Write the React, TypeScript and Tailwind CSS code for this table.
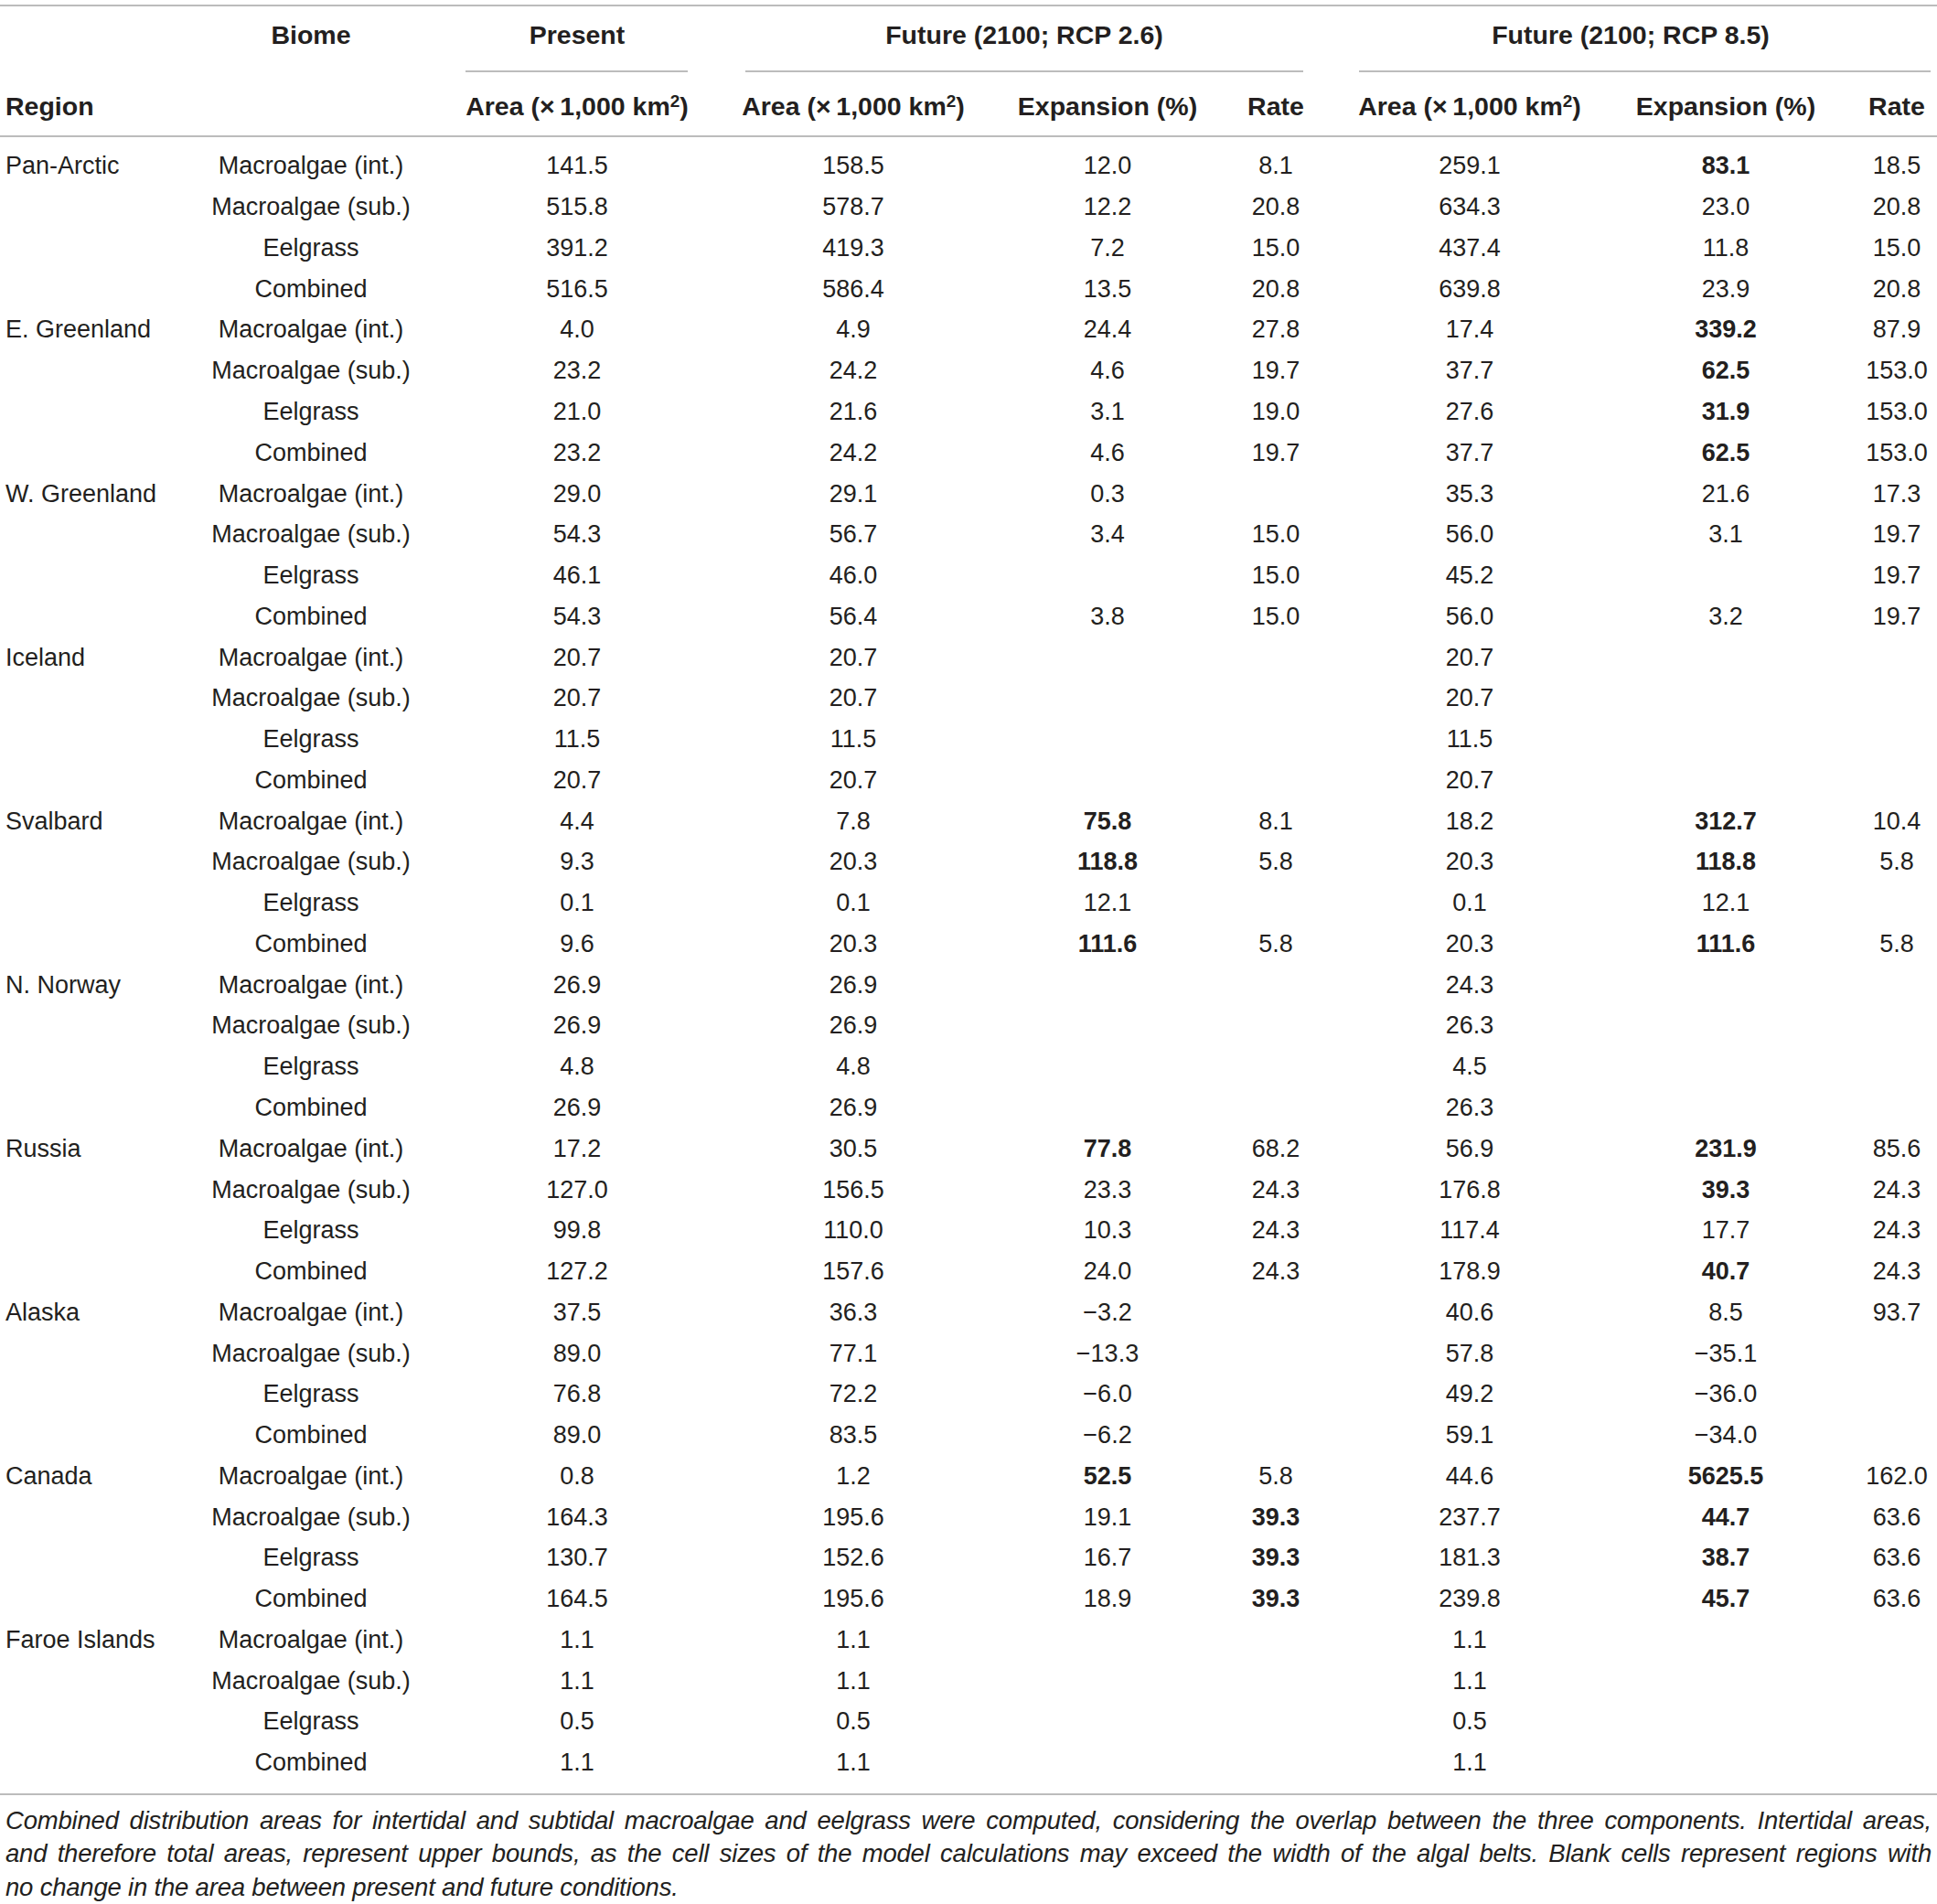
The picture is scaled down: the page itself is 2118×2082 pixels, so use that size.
import React from "react";

type Row = [string, string, string, string, string, string, string, string, string];

const data: Row[] = [
  ["Pan-Arctic", "Macroalgae (int.)", "141.5", "158.5", "12.0", "8.1", "259.1", "*83.1", "18.5"],
  ["", "Macroalgae (sub.)", "515.8", "578.7", "12.2", "20.8", "634.3", "23.0", "20.8"],
  ["", "Eelgrass", "391.2", "419.3", "7.2", "15.0", "437.4", "11.8", "15.0"],
  ["", "Combined", "516.5", "586.4", "13.5", "20.8", "639.8", "23.9", "20.8"],
  ["E. Greenland", "Macroalgae (int.)", "4.0", "4.9", "24.4", "27.8", "17.4", "*339.2", "87.9"],
  ["", "Macroalgae (sub.)", "23.2", "24.2", "4.6", "19.7", "37.7", "*62.5", "153.0"],
  ["", "Eelgrass", "21.0", "21.6", "3.1", "19.0", "27.6", "*31.9", "153.0"],
  ["", "Combined", "23.2", "24.2", "4.6", "19.7", "37.7", "*62.5", "153.0"],
  ["W. Greenland", "Macroalgae (int.)", "29.0", "29.1", "0.3", "", "35.3", "21.6", "17.3"],
  ["", "Macroalgae (sub.)", "54.3", "56.7", "3.4", "15.0", "56.0", "3.1", "19.7"],
  ["", "Eelgrass", "46.1", "46.0", "", "15.0", "45.2", "", "19.7"],
  ["", "Combined", "54.3", "56.4", "3.8", "15.0", "56.0", "3.2", "19.7"],
  ["Iceland", "Macroalgae (int.)", "20.7", "20.7", "", "", "20.7", "", ""],
  ["", "Macroalgae (sub.)", "20.7", "20.7", "", "", "20.7", "", ""],
  ["", "Eelgrass", "11.5", "11.5", "", "", "11.5", "", ""],
  ["", "Combined", "20.7", "20.7", "", "", "20.7", "", ""],
  ["Svalbard", "Macroalgae (int.)", "4.4", "7.8", "*75.8", "8.1", "18.2", "*312.7", "10.4"],
  ["", "Macroalgae (sub.)", "9.3", "20.3", "*118.8", "5.8", "20.3", "*118.8", "5.8"],
  ["", "Eelgrass", "0.1", "0.1", "12.1", "", "0.1", "12.1", ""],
  ["", "Combined", "9.6", "20.3", "*111.6", "5.8", "20.3", "*111.6", "5.8"],
  ["N. Norway", "Macroalgae (int.)", "26.9", "26.9", "", "", "24.3", "", ""],
  ["", "Macroalgae (sub.)", "26.9", "26.9", "", "", "26.3", "", ""],
  ["", "Eelgrass", "4.8", "4.8", "", "", "4.5", "", ""],
  ["", "Combined", "26.9", "26.9", "", "", "26.3", "", ""],
  ["Russia", "Macroalgae (int.)", "17.2", "30.5", "*77.8", "68.2", "56.9", "*231.9", "85.6"],
  ["", "Macroalgae (sub.)", "127.0", "156.5", "23.3", "24.3", "176.8", "*39.3", "24.3"],
  ["", "Eelgrass", "99.8", "110.0", "10.3", "24.3", "117.4", "17.7", "24.3"],
  ["", "Combined", "127.2", "157.6", "24.0", "24.3", "178.9", "*40.7", "24.3"],
  ["Alaska", "Macroalgae (int.)", "37.5", "36.3", "\u22123.2", "", "40.6", "8.5", "93.7"],
  ["", "Macroalgae (sub.)", "89.0", "77.1", "\u221213.3", "", "57.8", "\u221235.1", ""],
  ["", "Eelgrass", "76.8", "72.2", "\u22126.0", "", "49.2", "\u221236.0", ""],
  ["", "Combined", "89.0", "83.5", "\u22126.2", "", "59.1", "\u221234.0", ""],
  ["Canada", "Macroalgae (int.)", "0.8", "1.2", "*52.5", "5.8", "44.6", "*5625.5", "162.0"],
  ["", "Macroalgae (sub.)", "164.3", "195.6", "19.1", "*39.3", "237.7", "*44.7", "63.6"],
  ["", "Eelgrass", "130.7", "152.6", "16.7", "*39.3", "181.3", "*38.7", "63.6"],
  ["", "Combined", "164.5", "195.6", "18.9", "*39.3", "239.8", "*45.7", "63.6"],
  ["Faroe Islands", "Macroalgae (int.)", "1.1", "1.1", "", "", "1.1", "", ""],
  ["", "Macroalgae (sub.)", "1.1", "1.1", "", "", "1.1", "", ""],
  ["", "Eelgrass", "0.5", "0.5", "", "", "0.5", "", ""],
  ["", "Combined", "1.1", "1.1", "", "", "1.1", "", ""],
];

const grid =
  "grid grid-cols-[200px_280px_302px_302px_254px_114px_310px_268px_88px]";

function cellClass(i: number) {
  if (i === 0) return "flex items-center justify-start pl-[6px] whitespace-nowrap";
  if (i === 7) return "flex items-center justify-center pr-[18px] whitespace-nowrap";
  return "flex items-center justify-center whitespace-nowrap";
}

function Area() {
  return (
    <span>
      Area (×{"\u2009"}1,000 km<sup className="text-[19px]">2</sup>)
    </span>
  );
}

export default function App() {
  return (
    <div
      className="w-[2118px] h-[2082px] bg-white text-[#231f20] overflow-hidden"
      style={{ fontFamily: '"Liberation Sans", Arial, sans-serif' }}
    >
      <div className="pt-[5px]">
        <div className="border-t-2 border-[#bcbcbc]" />
        {/* Header row 1 */}
        <div className={grid + " text-[28.5px] font-bold leading-[62px]"}>
          <div />
          <div className="flex justify-center">Biome</div>
          <div className="flex flex-col">
            <div className="flex justify-center">Present</div>
            <div className="mt-[8px] ml-[29px] mr-[30px] border-t-2 border-[#bcbcbc]" />
          </div>
          <div className="col-span-3 flex flex-col">
            <div className="flex justify-center pl-[6px]">Future (2100; RCP 2.6)</div>
            <div className="mt-[8px] ml-[33px] mr-[27px] border-t-2 border-[#bcbcbc]" />
          </div>
          <div className="col-span-3 flex flex-col">
            <div className="flex justify-center pr-[4px]">Future (2100; RCP 8.5)</div>
            <div className="mt-[8px] ml-[34px] mr-[7px] border-t-2 border-[#bcbcbc]" />
          </div>
        </div>
        {/* Header row 2 */}
        <div className={grid + " text-[28.5px] font-bold h-[71px] leading-[62px] pt-[5px] border-b-2 border-[#bcbcbc]"}>
          <div className={cellClass(0)}>Region</div>
          <div className={cellClass(1)} />
          <div className={cellClass(2)}>
            <Area />
          </div>
          <div className={cellClass(3)}>
            <Area />
          </div>
          <div className={cellClass(4)}>Expansion (%)</div>
          <div className={cellClass(5)}>Rate</div>
          <div className={cellClass(6)}>
            <Area />
          </div>
          <div className={cellClass(7)}>Expansion (%)</div>
          <div className={cellClass(8)}>Rate</div>
        </div>
        {/* Body */}
        <div className={grid + " auto-rows-[44.77px] text-[27px] leading-[44px] pt-[9px] pb-[11px] border-b-2 border-[#bcbcbc]"}>
          {data.map((row, r) =>
            row.map((v, i) => {
              const bold = v.startsWith("*");
              const text = bold ? v.slice(1) : v;
              return (
                <div key={r + "-" + i} className={cellClass(i) + (bold ? " font-bold" : "")}>
                  {text}
                </div>
              );
            })
          )}
        </div>
        {/* Caption */}
        <div className="pt-[10px] pl-[6px] pr-[6px] text-[27.5px] tracking-[-0.2px] italic leading-[36.7px]">
          <div className="text-justify [text-align-last:justify]">
            Combined distribution areas for intertidal and subtidal macroalgae and eelgrass were computed, considering the overlap between the three components. Intertidal areas,
          </div>
          <div className="text-justify [text-align-last:justify]">
            and therefore total areas, represent upper bounds, as the cell sizes of the model calculations may exceed the width of the algal belts. Blank cells represent regions with
          </div>
          <div>no change in the area between present and future conditions.</div>
        </div>
      </div>
    </div>
  );
}
